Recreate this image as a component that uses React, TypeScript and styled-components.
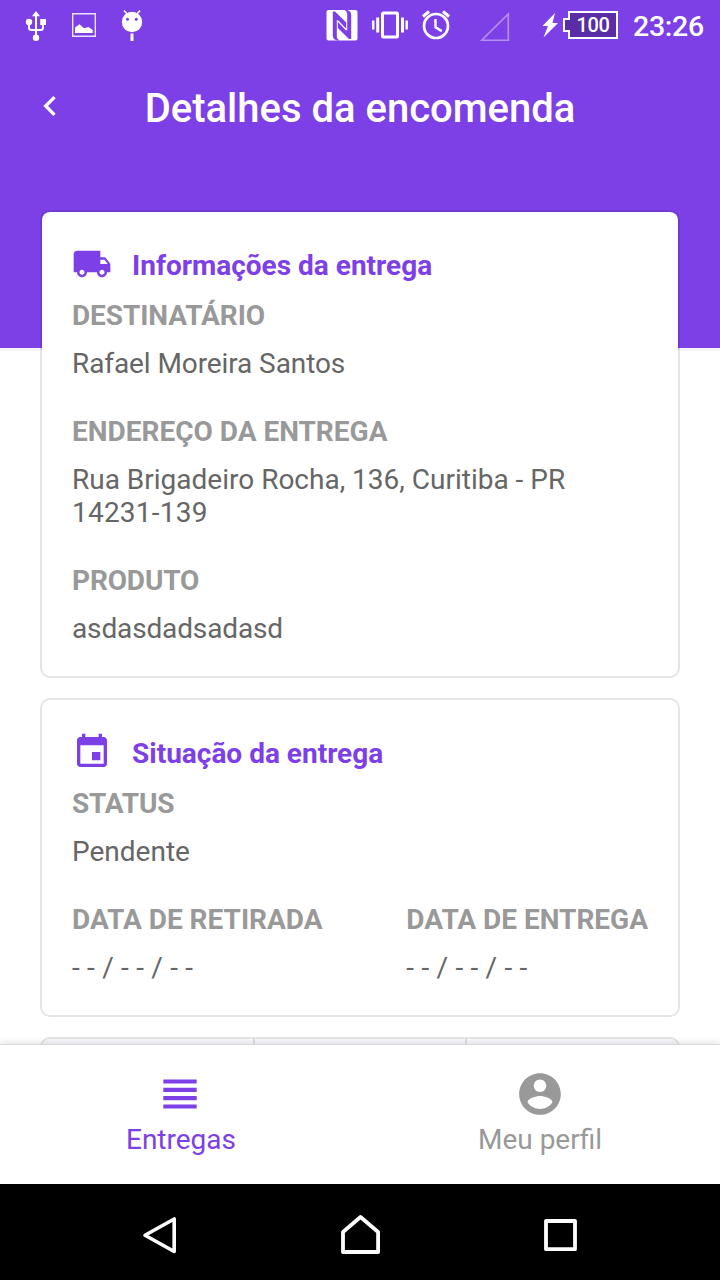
import React from 'react';
import styled, { createGlobalStyle } from 'styled-components';

const PURPLE = '#7d40e7';

const GlobalStyle = createGlobalStyle`
  *, *::before, *::after { box-sizing: border-box; }
  body {
    margin: 0;
    font-family: Roboto, "Liberation Sans", sans-serif;
    background: #fff;
  }
  svg { display: block; flex: none; }
`;

const Screen = styled.div`
  width: 720px;
  height: 1280px;
  display: flex;
  flex-direction: column;
  overflow: hidden;
`;

const Main = styled.main`
  flex: 1;
  min-height: 0;
  overflow: hidden;
  background: linear-gradient(${PURPLE} 348px, #f3f3f3 348px, #f3f3f3 351px, #fff 351px);
`;

const StatusBar = styled.div`
  height: 50px;
  display: flex;
  align-items: center;
  justify-content: space-between;
  color: #fff;
`;

const Clock = styled.span`
  width: 102px;
  padding-left: 15px;
  padding-top: 3px;
  font-size: 28.5px;
  font-weight: 500;
  line-height: 50px;
  letter-spacing: -0.3px;
`;

const StatusRight = styled.div`
  display: flex;
  align-items: center;
`;

const Battery = styled.div`
  width: 50px;
  height: 28px;
  margin-left: 8px;
  border: 2px solid #fff;
  background: #5a2ca5;
  font-size: 20px;
  font-weight: 500;
  line-height: 25px;
  letter-spacing: -0.4px;
  text-align: center;
`;

const BatteryTip = styled.div`
  width: 7px;
  height: 14px;
  margin-left: 2px;
  margin-right: -10px;
  z-index: 1;
  border: 2px solid #fff;
  border-right: none;
  background: #5a2ca5;
`;

const Header = styled.header`
  height: 160px;
  padding: 36px 30px 0;
  display: grid;
  grid-template-columns: 40px 1fr 40px;
  align-items: start;
  color: #fff;
`;

const Title = styled.h1`
  margin: 0;
  font-size: 40px;
  font-weight: 500;
  line-height: 46px;
  text-align: center;
`;

const Card = styled.section`
  margin: 0 40px 20px;
  padding: 32px 30px 31px;
  border: 2px solid rgba(0, 0, 0, 0.1);
  border-radius: 10px;
  background: #fff;
  background-clip: padding-box;
`;

const CardTitle = styled.h2`
  margin: 0 0 15px;
  height: 40px;
  display: flex;
  align-items: center;
  gap: 20px;
  font-size: 28px;
  font-weight: 700;
  line-height: 42px;
  color: ${PURPLE};
`;

const CardTitleText = styled.span`
  padding-top: 4px;
`;

const Label = styled.h3<{ $tracking?: number }>`
  margin: 0 0 15px;
  font-size: 28px;
  font-weight: 700;
  line-height: 33px;
  letter-spacing: ${(p) => p.$tracking ?? 0}px;
  color: #999;
`;

const Value = styled.p<{ $tracking?: number }>`
  margin: 0;
  font-size: 28px;
  line-height: 33px;
  letter-spacing: ${(p) => p.$tracking ?? 0}px;
  color: #666;
`;

const PostalCode = styled.span`
  letter-spacing: 0.22px;
  white-space: nowrap;
`;

const Field = styled.div`
  & + & { margin-top: 35px; }
`;

const Dates = styled.div`
  margin-top: 35px;
  display: flex;
  justify-content: space-between;
  ${Field} + ${Field} { margin-top: 0; }
`;

const Actions = styled.div`
  margin: 0 40px;
  height: 120px;
  display: grid;
  grid-template-columns: 211px 212px 1fr;
  border: 2px solid rgba(0, 0, 0, 0.1);
  border-radius: 10px;
  background: #f8f9fd;
  background-clip: padding-box;
`;

const Action = styled.div`
  & + & { border-left: 2px solid rgba(0, 0, 0, 0.1); }
`;

const TabBar = styled.nav`
  position: relative;
  height: 140px;
  display: grid;
  grid-template-columns: 1fr 1fr;
  border-top: 1px solid #d8d8d8;
  background: #fff;
  box-shadow: 0 0 8px rgba(0, 0, 0, 0.16);
`;

const Tab = styled.div<{ $active?: boolean }>`
  padding-top: 24px;
  display: flex;
  flex-direction: column;
  align-items: center;
  font-size: 28px;
  line-height: 42px;
  color: ${(p) => (p.$active ? PURPLE : '#999')};
`;

const TabText = styled.span<{ $indent?: number }>`
  padding-left: ${(p) => p.$indent ?? 0}px;
`;

const AndroidBar = styled.div`
  position: relative;
  height: 96px;
  padding: 6px 141px 0;
  display: flex;
  align-items: center;
  justify-content: space-between;
  background: #000;
`;

const Glyph = ({ size, d }: { size: number; d: string }) => (
  <svg width={size} height={size} viewBox="0 0 24 24" fill="currentColor">
    <path d={d} />
  </svg>
);

const CHEVRON = 'M15.41 7.41 14 6l-6 6 6 6 1.41-1.41L10.83 12z';
const TRUCK =
  'M20 8h-3V4H3c-1.1 0-2 .9-2 2v11h2c0 1.66 1.34 3 3 3s3-1.34 3-3h6c0 1.66 1.34 3 3 3s3-1.34 3-3h2v-5l-3-4zM6 18.5c-.83 0-1.5-.67-1.5-1.5s.67-1.5 1.5-1.5 1.5.67 1.5 1.5-.67 1.5-1.5 1.5zm13.5-9l1.96 2.5H17V9.5h2.5zm-1.5 9c-.83 0-1.5-.67-1.5-1.5s.67-1.5 1.5-1.5 1.5.67 1.5 1.5-.67 1.5-1.5 1.5z';
const EVENT =
  'M17 12h-5v5h5v-5zM16 1v2H8V1H6v2H5c-1.11 0-1.99.9-1.99 2L3 19c0 1.1.89 2 2 2h14c1.1 0 2-.9 2-2V5c0-1.1-.9-2-2-2h-1V1h-2zm3 18H5V8h14v11z';
const HEADLINE = 'M4 15h16v-2H4v2zm0 4h16v-2H4v2zm0-8h16V9H4v2zm0-6v2h16V5H4z';
const ACCOUNT =
  'M12 2C6.48 2 2 6.48 2 12s4.48 10 10 10 10-4.48 10-10S17.52 2 12 2zm0 3c1.66 0 3 1.34 3 3s-1.34 3-3 3-3-1.34-3-3 1.34-3 3-3zm0 14.2c-2.5 0-4.71-1.28-6-3.22.03-1.99 4-3.08 6-3.08 1.99 0 5.97 1.09 6 3.08-1.29 1.94-3.5 3.22-6 3.22z';
/* One half of the NFC mark; the other half is the same shape turned by 180 degrees. */
const NFC_HALF = 'M332.800 11.500H335L346.200 22.500V28.800L336.800 19.800V37Q337 39.500 339.500 40.500H337Q332.800 39.500 332.800 35.500z';

const Notifications = () => (
  <svg width="160" height="50" viewBox="0 0 160 50" fill="#fff">
    <path d="M36 11l4 5.300h-8z" />
    <path d="M36 15v22M29 23v4.500q0 2.500 2.500 2.500h9q2.500 0 2.500-2.500V23" fill="none" stroke="#fff" strokeWidth="2" />
    <circle cx="29" cy="22" r="3.200" />
    <path d="M40.200 19h5.800v6h-5.800z" />
    <circle cx="36" cy="37.800" r="3.200" />
    <path d="M72.700 13.700h22.600v22.600H72.700z" fill="none" stroke="#fff" strokeWidth="1.400" opacity=".85" />
    <path d="M75 33v-5.500l4.500-3.300 4.500 4 4.500-1.200 4.200 3V33z" />
    <path d="M124 10.500l3.500 4M140 10.500l-3.500 4" stroke="#fff" strokeWidth="1.600" />
    <circle cx="132" cy="22" r="10.200" />
    <circle cx="127.500" cy="19.300" r="1.500" fill={PURPLE} />
    <circle cx="136.300" cy="19.300" r="1.500" fill={PURPLE} />
    <path d="M130.500 33.500h3V41h-3z" />
  </svg>
);

const SystemIcons = () => (
  <svg width="236" height="50" viewBox="325 0 236 50" fill="none" stroke="#fff">
    <rect x="326.500" y="10" width="31" height="30.500" rx="2" fill="#fff" stroke="none" />
    <path d={NFC_HALF} fill={PURPLE} stroke="none" />
    <path d={NFC_HALF} fill={PURPLE} stroke="none" transform="rotate(180 342 25.250)" />
    <path d="M337.800 20.700L346.200 29.800" stroke="#fff" strokeWidth="1.200" />
    <rect x="382.500" y="13" width="15" height="24" rx="1" strokeWidth="3" />
    <path d="M377.700 17.500v15M402.500 17.500v15" strokeWidth="3" />
    <path d="M373.200 20.500v9M406.700 20.500v9" strokeWidth="2.500" />
    <circle cx="436" cy="26" r="12" strokeWidth="2.700" />
    <path d="M435.500 19v8.300l6.300 3.800" strokeWidth="2.400" />
    <path d="M423 16.500l6-5M449 16.500l-6-5" strokeWidth="3" />
    <path d="M481.700 40.300L508.300 14v26.300z" strokeWidth="1.600" opacity=".42" />
    <path d="M555 13l-12.500 13h5.500l-4.500 11.500L558 23h-5.500z" fill="#fff" stroke="none" />
  </svg>
);

export default function App() {
  return (
    <Screen>
      <GlobalStyle />
      <Main>
        <StatusBar>
          <Notifications />
          <StatusRight>
            <SystemIcons />
            <BatteryTip />
            <Battery>100</Battery>
            <Clock>23:26</Clock>
          </StatusRight>
        </StatusBar>
        <Header>
          <Glyph size={40} d={CHEVRON} />
          <Title>Detalhes da encomenda</Title>
        </Header>
        <Card>
          <CardTitle>
            <Glyph size={40} d={TRUCK} />
            <CardTitleText>Informações da entrega</CardTitleText>
          </CardTitle>
          <Field>
            <Label $tracking={-0.08}>DESTINATÁRIO</Label>
            <Value $tracking={-0.09}>Rafael Moreira Santos</Value>
          </Field>
          <Field>
            <Label>ENDEREÇO DA ENTREGA</Label>
            <Value>
              Rua Brigadeiro Rocha, 136, Curitiba - PR <PostalCode>14231-139</PostalCode>
            </Value>
          </Field>
          <Field>
            <Label $tracking={-0.14}>PRODUTO</Label>
            <Value $tracking={-0.14}>asdasdadsadasd</Value>
          </Field>
        </Card>
        <Card>
          <CardTitle>
            <Glyph size={40} d={EVENT} />
            <CardTitleText>Situação da entrega</CardTitleText>
          </CardTitle>
          <Field>
            <Label $tracking={-0.16}>STATUS</Label>
            <Value>Pendente</Value>
          </Field>
          <Dates>
            <Field>
              <Label>DATA DE RETIRADA</Label>
              <Value $tracking={0.2}>- - / - - / - -</Value>
            </Field>
            <Field>
              <Label>DATA DE ENTREGA</Label>
              <Value $tracking={0.2}>- - / - - / - -</Value>
            </Field>
          </Dates>
        </Card>
        <Actions>
          <Action />
          <Action />
          <Action />
        </Actions>
      </Main>
      <TabBar>
        <Tab $active>
          <Glyph size={50} d={HEADLINE} />
          <TabText $indent={2}>Entregas</TabText>
        </Tab>
        <Tab>
          <Glyph size={50} d={ACCOUNT} />
          <TabText>Meu perfil</TabText>
        </Tab>
      </TabBar>
      <AndroidBar>
        <svg width="38" height="44" viewBox="141 1213 38 44" fill="none" stroke="#fff" strokeWidth="3.600" strokeLinejoin="round">
          <path d="M174.200 1219v32.500L145 1235.300z" />
        </svg>
        <svg width="44" height="44" viewBox="338 1213 44 44" fill="none" stroke="#fff" strokeWidth="3.800" strokeLinejoin="round">
          <path d="M343 1232l17.500-15 17.600 15v20H343z" />
        </svg>
        <svg width="38" height="44" viewBox="541 1213 38 44" fill="none" stroke="#fff" strokeWidth="3.800" strokeLinejoin="round">
          <path d="M546 1221h29v28.200h-29z" />
        </svg>
      </AndroidBar>
    </Screen>
  );
}
